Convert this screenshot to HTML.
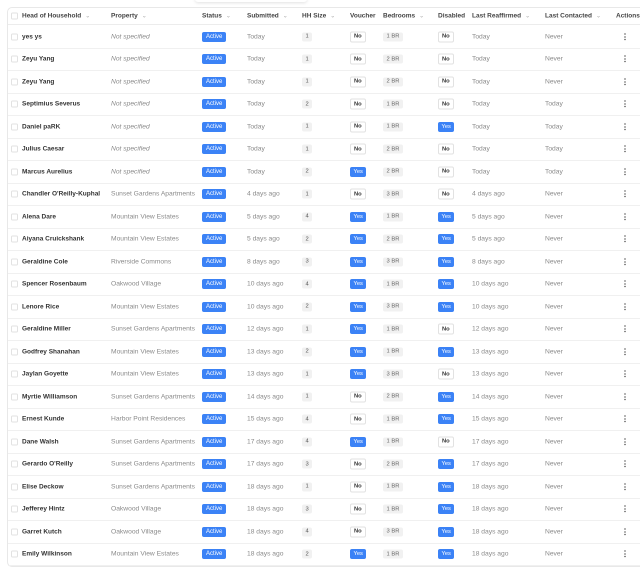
<!DOCTYPE html>
<html><head><meta charset="utf-8"><style>
*{margin:0;padding:0;box-sizing:border-box}
body{width:640px;height:553px;overflow:hidden;background:#fff;font-family:"Liberation Sans",sans-serif;position:relative}
.card{position:absolute;left:7px;top:7px;width:640px;height:560px;border:1px solid #e8e8e8;border-radius:5px;background:#fff}
.topbar{position:absolute;left:195px;top:-4px;width:112px;height:6px;border-radius:3px;box-shadow:0 1px 3px rgba(0,0,0,.12);background:#fff}
.r{position:absolute;left:8px;width:640px;height:22.5px;border-bottom:1px solid #f0f0f0}
.r>*{position:absolute;top:50%;transform:translateY(-50%);font-size:6.7px;white-space:nowrap;color:#8a8a8a}
.h{height:18px;top:7px;border-bottom:1px solid #ececec}
.h>*{color:#444;font-weight:bold;font-size:6.5px}
.h i{font-style:normal;color:#aaa;font-weight:normal;font-size:6px;margin-left:4px}
.cb{left:3px;width:7px;height:7px;border:1px solid #e2e2e2;border-radius:1.5px;background:#fff}
.n{left:14px;color:#333!important;font-weight:bold;font-size:6.5px!important}
.p{left:103px}
.ns{font-style:italic}
.s{left:194px;background:#3b82f6;color:#fff!important;border-radius:2px;padding:2px 4px;font-size:6px!important}
.d{left:239px}
.hh{left:294px;background:#f1f1f1;border-radius:2px;padding:1.5px 3.5px;color:#555!important;font-size:5.8px!important}
.v{left:342px}
.b{left:375px;background:#f1f1f1;border-radius:2px;padding:1.5px 3.5px;color:#666!important;font-size:5.8px!important}
.x{left:430px}
.no{border:1px solid #e2e2e2;border-radius:2px;padding:1.5px 3px;color:#333!important;font-size:5.8px!important;font-weight:bold;background:#fff}
.yes{background:#3b82f6;border-radius:2px;padding:2px 3.5px;color:#fff!important;font-size:5.8px!important}
.lr{left:464px}
.lc{left:537px}
.a{left:613px;color:#333!important;font-weight:bold;font-size:8px!important;letter-spacing:0}
</style></head><body>
<div class="topbar"></div>
<div class="card"></div>
<div class="r h"><span class="cb" style="transform:translateY(-50%)"></span><span style="left:14px">Head of Household<i>⌄</i></span><span style="left:103px">Property<i>⌄</i></span><span style="left:194px">Status<i>⌄</i></span><span style="left:239px">Submitted<i>⌄</i></span><span style="left:294px">HH Size<i>⌄</i></span><span style="left:342px">Voucher</span><span style="left:375px">Bedrooms<i>⌄</i></span><span style="left:430px">Disabled</span><span style="left:464px">Last Reaffirmed<i>⌄</i></span><span style="left:537px">Last Contacted<i>⌄</i></span><span style="left:608px">Actions</span></div>

<div class="r" style="top:26px"><span class="cb"></span><span class="n">yes ys</span><span class="p ns">Not specified</span><span class="s">Active</span><span class="d">Today</span><span class="hh">1</span><span class="v no">No</span><span class="b">1 BR</span><span class="x no">No</span><span class="lr">Today</span><span class="lc">Never</span><span class="a">⋮</span></div>
<div class="r" style="top:48.5px"><span class="cb"></span><span class="n">Zeyu Yang</span><span class="p ns">Not specified</span><span class="s">Active</span><span class="d">Today</span><span class="hh">1</span><span class="v no">No</span><span class="b">2 BR</span><span class="x no">No</span><span class="lr">Today</span><span class="lc">Never</span><span class="a">⋮</span></div>
<div class="r" style="top:71px"><span class="cb"></span><span class="n">Zeyu Yang</span><span class="p ns">Not specified</span><span class="s">Active</span><span class="d">Today</span><span class="hh">1</span><span class="v no">No</span><span class="b">2 BR</span><span class="x no">No</span><span class="lr">Today</span><span class="lc">Never</span><span class="a">⋮</span></div>
<div class="r" style="top:93.5px"><span class="cb"></span><span class="n">Septimius Severus</span><span class="p ns">Not specified</span><span class="s">Active</span><span class="d">Today</span><span class="hh">2</span><span class="v no">No</span><span class="b">1 BR</span><span class="x no">No</span><span class="lr">Today</span><span class="lc">Today</span><span class="a">⋮</span></div>
<div class="r" style="top:116px"><span class="cb"></span><span class="n">Daniel paRK</span><span class="p ns">Not specified</span><span class="s">Active</span><span class="d">Today</span><span class="hh">1</span><span class="v no">No</span><span class="b">1 BR</span><span class="x yes">Yes</span><span class="lr">Today</span><span class="lc">Today</span><span class="a">⋮</span></div>
<div class="r" style="top:138.5px"><span class="cb"></span><span class="n">Julius Caesar</span><span class="p ns">Not specified</span><span class="s">Active</span><span class="d">Today</span><span class="hh">1</span><span class="v no">No</span><span class="b">2 BR</span><span class="x no">No</span><span class="lr">Today</span><span class="lc">Today</span><span class="a">⋮</span></div>
<div class="r" style="top:161px"><span class="cb"></span><span class="n">Marcus Aurelius</span><span class="p ns">Not specified</span><span class="s">Active</span><span class="d">Today</span><span class="hh">2</span><span class="v yes">Yes</span><span class="b">2 BR</span><span class="x no">No</span><span class="lr">Today</span><span class="lc">Today</span><span class="a">⋮</span></div>
<div class="r" style="top:183.5px"><span class="cb"></span><span class="n">Chandler O'Reilly-Kuphal</span><span class="p">Sunset Gardens Apartments</span><span class="s">Active</span><span class="d">4 days ago</span><span class="hh">1</span><span class="v no">No</span><span class="b">3 BR</span><span class="x no">No</span><span class="lr">4 days ago</span><span class="lc">Never</span><span class="a">⋮</span></div>
<div class="r" style="top:206px"><span class="cb"></span><span class="n">Alena Dare</span><span class="p">Mountain View Estates</span><span class="s">Active</span><span class="d">5 days ago</span><span class="hh">4</span><span class="v yes">Yes</span><span class="b">1 BR</span><span class="x yes">Yes</span><span class="lr">5 days ago</span><span class="lc">Never</span><span class="a">⋮</span></div>
<div class="r" style="top:228.5px"><span class="cb"></span><span class="n">Aiyana Cruickshank</span><span class="p">Mountain View Estates</span><span class="s">Active</span><span class="d">5 days ago</span><span class="hh">2</span><span class="v yes">Yes</span><span class="b">2 BR</span><span class="x yes">Yes</span><span class="lr">5 days ago</span><span class="lc">Never</span><span class="a">⋮</span></div>
<div class="r" style="top:251px"><span class="cb"></span><span class="n">Geraldine Cole</span><span class="p">Riverside Commons</span><span class="s">Active</span><span class="d">8 days ago</span><span class="hh">3</span><span class="v yes">Yes</span><span class="b">3 BR</span><span class="x yes">Yes</span><span class="lr">8 days ago</span><span class="lc">Never</span><span class="a">⋮</span></div>
<div class="r" style="top:273.5px"><span class="cb"></span><span class="n">Spencer Rosenbaum</span><span class="p">Oakwood Village</span><span class="s">Active</span><span class="d">10 days ago</span><span class="hh">4</span><span class="v yes">Yes</span><span class="b">1 BR</span><span class="x yes">Yes</span><span class="lr">10 days ago</span><span class="lc">Never</span><span class="a">⋮</span></div>
<div class="r" style="top:296px"><span class="cb"></span><span class="n">Lenore Rice</span><span class="p">Mountain View Estates</span><span class="s">Active</span><span class="d">10 days ago</span><span class="hh">2</span><span class="v yes">Yes</span><span class="b">3 BR</span><span class="x yes">Yes</span><span class="lr">10 days ago</span><span class="lc">Never</span><span class="a">⋮</span></div>
<div class="r" style="top:318.5px"><span class="cb"></span><span class="n">Geraldine Miller</span><span class="p">Sunset Gardens Apartments</span><span class="s">Active</span><span class="d">12 days ago</span><span class="hh">1</span><span class="v yes">Yes</span><span class="b">1 BR</span><span class="x no">No</span><span class="lr">12 days ago</span><span class="lc">Never</span><span class="a">⋮</span></div>
<div class="r" style="top:341px"><span class="cb"></span><span class="n">Godfrey Shanahan</span><span class="p">Mountain View Estates</span><span class="s">Active</span><span class="d">13 days ago</span><span class="hh">2</span><span class="v yes">Yes</span><span class="b">1 BR</span><span class="x yes">Yes</span><span class="lr">13 days ago</span><span class="lc">Never</span><span class="a">⋮</span></div>
<div class="r" style="top:363.5px"><span class="cb"></span><span class="n">Jaylan Goyette</span><span class="p">Mountain View Estates</span><span class="s">Active</span><span class="d">13 days ago</span><span class="hh">1</span><span class="v yes">Yes</span><span class="b">3 BR</span><span class="x no">No</span><span class="lr">13 days ago</span><span class="lc">Never</span><span class="a">⋮</span></div>
<div class="r" style="top:386px"><span class="cb"></span><span class="n">Myrtie Williamson</span><span class="p">Sunset Gardens Apartments</span><span class="s">Active</span><span class="d">14 days ago</span><span class="hh">1</span><span class="v no">No</span><span class="b">2 BR</span><span class="x yes">Yes</span><span class="lr">14 days ago</span><span class="lc">Never</span><span class="a">⋮</span></div>
<div class="r" style="top:408.5px"><span class="cb"></span><span class="n">Ernest Kunde</span><span class="p">Harbor Point Residences</span><span class="s">Active</span><span class="d">15 days ago</span><span class="hh">4</span><span class="v no">No</span><span class="b">1 BR</span><span class="x yes">Yes</span><span class="lr">15 days ago</span><span class="lc">Never</span><span class="a">⋮</span></div>
<div class="r" style="top:431px"><span class="cb"></span><span class="n">Dane Walsh</span><span class="p">Sunset Gardens Apartments</span><span class="s">Active</span><span class="d">17 days ago</span><span class="hh">4</span><span class="v yes">Yes</span><span class="b">1 BR</span><span class="x no">No</span><span class="lr">17 days ago</span><span class="lc">Never</span><span class="a">⋮</span></div>
<div class="r" style="top:453.5px"><span class="cb"></span><span class="n">Gerardo O'Reilly</span><span class="p">Sunset Gardens Apartments</span><span class="s">Active</span><span class="d">17 days ago</span><span class="hh">3</span><span class="v no">No</span><span class="b">2 BR</span><span class="x yes">Yes</span><span class="lr">17 days ago</span><span class="lc">Never</span><span class="a">⋮</span></div>
<div class="r" style="top:476px"><span class="cb"></span><span class="n">Elise Deckow</span><span class="p">Sunset Gardens Apartments</span><span class="s">Active</span><span class="d">18 days ago</span><span class="hh">1</span><span class="v no">No</span><span class="b">1 BR</span><span class="x yes">Yes</span><span class="lr">18 days ago</span><span class="lc">Never</span><span class="a">⋮</span></div>
<div class="r" style="top:498.5px"><span class="cb"></span><span class="n">Jefferey Hintz</span><span class="p">Oakwood Village</span><span class="s">Active</span><span class="d">18 days ago</span><span class="hh">3</span><span class="v no">No</span><span class="b">1 BR</span><span class="x yes">Yes</span><span class="lr">18 days ago</span><span class="lc">Never</span><span class="a">⋮</span></div>
<div class="r" style="top:521px"><span class="cb"></span><span class="n">Garret Kutch</span><span class="p">Oakwood Village</span><span class="s">Active</span><span class="d">18 days ago</span><span class="hh">4</span><span class="v no">No</span><span class="b">3 BR</span><span class="x yes">Yes</span><span class="lr">18 days ago</span><span class="lc">Never</span><span class="a">⋮</span></div>
<div class="r" style="top:543.5px"><span class="cb"></span><span class="n">Emily Wilkinson</span><span class="p">Mountain View Estates</span><span class="s">Active</span><span class="d">18 days ago</span><span class="hh">2</span><span class="v yes">Yes</span><span class="b">1 BR</span><span class="x yes">Yes</span><span class="lr">18 days ago</span><span class="lc">Never</span><span class="a">⋮</span></div>
</body></html>
